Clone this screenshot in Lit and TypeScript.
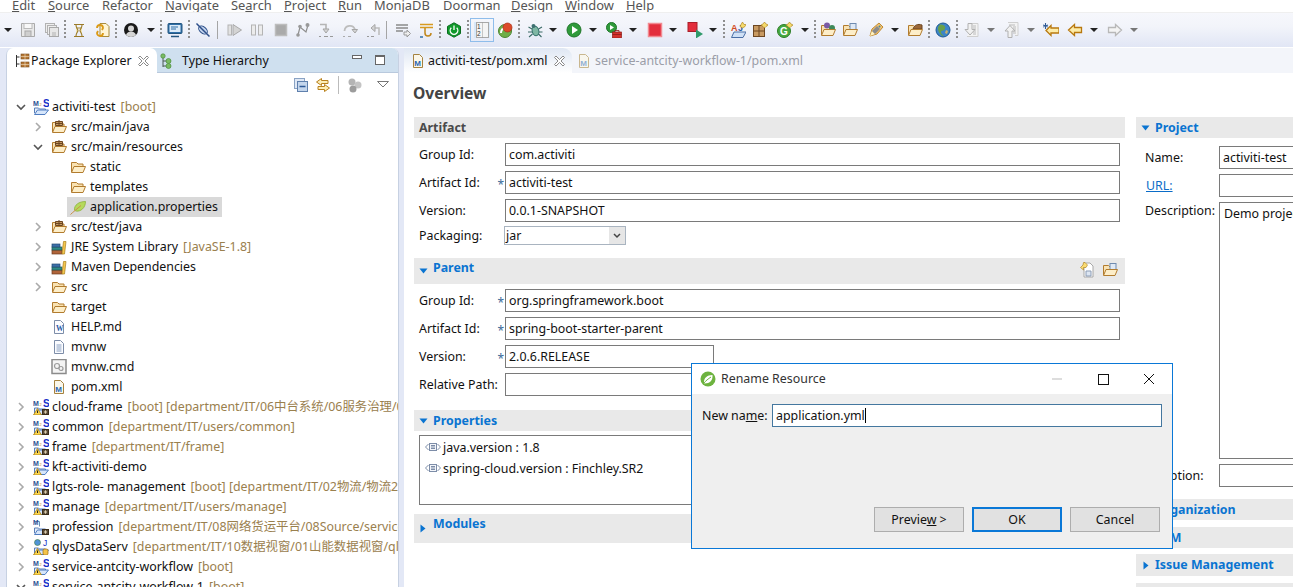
import { LitElement, html, css, svg } from "lit";
import { customElement } from "lit/decorators.js";

const ORG = "#b27c2e";
const folderBack = svg`<path d="M1.5 13V3.5h5l1.5 1.5h5V7" fill="#f9e2b2" stroke="${ORG}"/>`;
const folderFront = svg`<path d="M1.5 13.5 4 7.5h11.5l-2.5 6z" fill="#fdeec9" stroke="${ORG}"/>`;
const openFolder = svg`${folderBack}${folderFront}`;
const pkgGrid = svg`<path d="M4.5 2.5h7v4h-7zM8 1v5.500M4.500 4.500h7" fill="#c59a63" stroke="#6d4722"/>`;
const letters = svg`<text x="0" y="6.500" font-size="7" font-weight="700" font-family="Liberation Sans" fill="#2a4f93">M</text><text x="6.500" y="6.500" font-size="4" font-family="Liberation Sans" fill="#d08a20">2</text><text x="10" y="8" font-size="10" font-weight="700" font-family="Liberation Sans" fill="#1430c8">S</text>`;
const blueFolder = svg`<path d="M1.500 14V9h4l1 1h6v1" fill="#e6eefa" stroke="#5a7fb8"/><path d="M1.500 15.500l3-4.500h11l-3.500 4.500z" fill="#d6e6fb" stroke="#4f7cc0"/>`;
const warn = svg`<path d="M4.500 9.500 8.500 16H.5z" fill="#fbd44b" stroke="#a77b12" stroke-width=".8"/><path d="M4.500 11.500v2.500" stroke="#222" stroke-width="1"/>`;
const dark = svg`<rect x="9" y="10" width="7" height="6" fill="#3a2c1a"/><path d="M12.500 11v4M10.500 13h4M11 11.500l3 3M14 11.500l-3 3" stroke="#e9dcc0" stroke-width=".7"/>`;
const docBase = svg`<path d="M3.500 1.500h6l3 3v10h-9z" fill="#fbfcff" stroke="#7d8da8"/>`;

const ICONS: Record<string, unknown> = {
  proj: svg`${letters}${blueFolder}`,
  projw: svg`${letters}${blueFolder}${warn}`,
  projwd: svg`${letters}${blueFolder}${warn}${dark}`,
  projd: svg`<path d="M1.500 2.500h5v5" fill="none" stroke="#6d8ab5"/><text x="0" y="6" font-size="6.500" font-weight="700" font-family="Liberation Sans" fill="#2a4f93">M</text>${blueFolder}${dark}`,
  qlys: svg`<circle cx="4.500" cy="3.500" r="3" fill="#4f93d8" stroke="#3f7a3a" stroke-width=".6"/><text x="10" y="7" font-size="8.500" font-family="Liberation Sans" fill="#1430c8">J</text>${blueFolder}${warn}<rect x="10" y="10" width="5" height="6" rx="1.500" fill="#f3c34a" stroke="#9c6c12" stroke-width=".7"/>`,
  pkg: svg`${folderBack}${pkgGrid}${folderFront}`,
  folder: openFolder,
  leaf: svg`<path d="M4.500 11C4 6 9 2.500 15.500 2.500 15.500 8.500 11 13 5.500 12z" fill="#b6d95c" stroke="#8ab23a" stroke-width=".8"/><path d="M.5 15.500C3 13 7 10 11 6.500" stroke="#c98f45" fill="none"/>`,
  lib: svg`<rect x="1" y="11" width="10" height="4" fill="#b0643a" stroke="#6e3b1e" stroke-width=".7"/><rect x="1" y="8" width="10" height="3" fill="#2f8a87" stroke="#1d5a58" stroke-width=".7"/><rect x="1" y="5" width="8" height="3" fill="#3c6fa8" stroke="#274a75" stroke-width=".7"/><path d="M11 15 12.500 2.500h2.500L13.500 15z" fill="#f4c64f" stroke="#a97f19" stroke-width=".7"/>`,
  docw: svg`${docBase}<text x="5" y="12" font-size="7.500" font-weight="700" font-family="Liberation Serif" fill="#2a5aa5">W</text>`,
  doc: svg`${docBase}<path d="M5.500 6h5M5.500 8h5M5.500 10h5M5.500 12h5" stroke="#8aa0c0"/>`,
  cmd: svg`<rect x="1" y=".5" width="14" height="14" fill="#f4f4f4" stroke="#8b8b8b" stroke-width="1.500"/><circle cx="6" cy="7" r="2.500" fill="none" stroke="#9b9b9b" stroke-width="1.200"/><circle cx="10" cy="9.500" r="2" fill="none" stroke="#9b9b9b" stroke-width="1.200"/>`,
  m: svg`<path d="M3.500 1.500h6l3 3v10h-9z" fill="#fbf7ea" stroke="#a5823f"/><text x="4.200" y="12.500" font-size="8" font-weight="700" font-family="Liberation Sans" fill="#2a66b0">M</text>`,
  mg: svg`<path d="M3.500 1.500h6l3 3v10h-9z" fill="#f8f6ee" stroke="#c9b78f"/><text x="4.200" y="12.500" font-size="8" font-weight="700" font-family="Liberation Sans" fill="#92b0d4">M</text>`,
  pkgexp: svg`<path d="M1.500 2v12" stroke="#333" fill="none"/><path d="M1.500 4h3M1.500 11h3" stroke="#333"/><rect x="6" y="1" width="8" height="5" fill="#b57734" stroke="#7a4b1c" stroke-width=".6"/><rect x="6" y="9" width="8" height="5" fill="#b57734" stroke="#7a4b1c" stroke-width=".6"/><path d="M10 1v13M6 3.500h8M6 11.500h8" stroke="#f3e2c6" stroke-width=".6"/>`,
  hier: svg`<path d="M3 3v11M3 8h6M3 13h6" stroke="#4a5a55" fill="none"/><circle cx="3" cy="3" r="2.200" fill="#79bb63" stroke="#4c8d3d" stroke-width=".7"/><circle cx="8.500" cy="8" r="2.500" fill="#79bb63" stroke="#4c8d3d" stroke-width=".7"/><circle cx="8.500" cy="13" r="2.500" fill="#79bb63" stroke="#4c8d3d" stroke-width=".7"/>`,
  x: svg`<path d="M2.500 3.500 4 2l3.500 3.500L11 2l1.500 1.500L9 7l3.500 3.500L11 12 7.500 8.500 4 12l-1.500-1.500L6 7z" fill="#fff" stroke="#7d7d7d" stroke-width=".9" transform="translate(1 1)"/>`,
  collapse: svg`<rect x="1.500" y="1.500" width="10" height="10" fill="#dfe8f5" stroke="#8aa3c4"/><rect x="4.500" y="4.500" width="10" height="10" fill="#c4d6ec" stroke="#5f80ad"/><path d="M6.500 9.500h6" stroke="#2d5a96" stroke-width="1.300"/>`,
  link: svg`<path d="M6.500 1.500 1.500 5l5 3.500V6.500H13v-3H6.500z" fill="#fdeeb6" stroke="#b8801c"/><path d="M9.500 7.500l5 3.500-5 3.500v-2H3v-3h6.500z" fill="#fdeeb6" stroke="#b8801c"/>`,
  gears: svg`<circle cx="5" cy="5" r="3.500" fill="#b4b4b4"/><circle cx="11" cy="8" r="3.500" fill="#c4c4c4"/><circle cx="6" cy="12" r="3.500" fill="#9c9c9c"/>`,
  menu: svg`<path d="M1.500 4.500h11L7 10z" fill="#fff" stroke="#777"/>`,
  save: svg`<path d="M1.500 1.500h13v13h-13z" fill="#e9e9e9" stroke="#a9a9a9"/><rect x="4" y="1.500" width="8" height="5" fill="#f8f8f8" stroke="#b9b9b9"/><rect x="5" y="9" width="6" height="5.500" fill="#cfcfcf" stroke="#a9a9a9"/>`,
  saveall: svg`<rect x="1.500" y="1.500" width="9" height="9" fill="#eee" stroke="#b2b2b2"/><rect x="3.500" y="3.500" width="9" height="9" fill="#eee" stroke="#b2b2b2"/><rect x="5.500" y="5.500" width="9" height="9" fill="#e7e7e7" stroke="#a9a9a9"/><rect x="8" y="10" width="4" height="4" fill="#ccc"/>`,
  opentype: svg`<path d="M3 2.500h10M3 14.500h10M5 3c0 3 2 4 2 5.500S5 11 5 14M11 3c0 3-2 4-2 5.500s2 2.500 2 5.500" stroke="#9a7a28" fill="#f4e7b4" stroke-width="1.100"/><path d="M5.500 6h5" stroke="#a38632"/>`,
  openres: svg`<path d="M5 1.500h6l3 3v10H5z" fill="#fff6d6" stroke="#a98c3c"/><path d="M2 6a3 3 0 0 1 6 0L7 8M8 11a3 3 0 0 1-6 0l1-2" fill="none" stroke="#db9a16" stroke-width="1.800"/>`,
  person: svg`<circle cx="8" cy="8" r="7" fill="#1a1a1a"/><circle cx="8" cy="6.500" r="3" fill="#d5d5d5"/><path d="M3 13c1-3 3-3.500 5-3.500s4 .5 5 3.500a7 7 0 0 1-10 0z" fill="#d5d5d5"/>`,
  monitor: svg`<rect x="1" y="1.500" width="14" height="10" rx="1" fill="#2f6fa8" stroke="#24567f"/><rect x="2.500" y="3" width="11" height="7" fill="#dcebf8"/><path d="M4 5h7M4 7h5" stroke="#2f6fa8"/><path d="M4 14.500h8" stroke="#24567f" stroke-width="1.500"/>`,
  nobug: svg`<ellipse cx="8" cy="8" rx="5" ry="3.200" fill="#c4d5ee" stroke="#2d4f89" transform="rotate(40 8 8)"/><path d="M1.500 1.500 14.500 14.500" stroke="#2d4f89" stroke-width="1.500"/>`,
  resume: svg`<rect x="1" y="3" width="3.500" height="10" fill="#e2e2e2" stroke="#b4b4b4"/><path d="M6 2.500 14.500 8 6 13.500z" fill="#d4d4d4" stroke="#a9a9a9"/>`,
  pause: svg`<rect x="2.500" y="3" width="4" height="10" fill="#ececec" stroke="#b4b4b4"/><rect x="9.500" y="3" width="4" height="10" fill="#ececec" stroke="#b4b4b4"/>`,
  stopg: svg`<rect x="2.500" y="2.500" width="11" height="11" fill="#aaa" stroke="#bdbdbd" stroke-width="1.500"/>`,
  disc: svg`<path d="M3 13 5 5l6 5 2-7" fill="none" stroke="#8e8e8e" stroke-width="1.200"/><circle cx="3" cy="13" r="1.800" fill="#999"/><circle cx="5" cy="4.500" r="1.800" fill="#999"/><circle cx="12.500" cy="3" r="2" fill="#999"/>`,
  sinto: svg`<path d="M2 2.500h6l0 6" fill="none" stroke="#b5b5b5" stroke-width="1.600"/><path d="M5 7h6l-3 4z" fill="#d5d5d5" stroke="#a5a5a5"/><path d="M1 14.500h2M6 14.500h4M12 14.500h3" stroke="#999"/>`,
  sover: svg`<path d="M2.500 9C3 3 11 2 13 7.500" fill="none" stroke="#bdbdbd" stroke-width="1.800"/><path d="M10 7.500h5.500L13 11z" fill="#d5d5d5" stroke="#a5a5a5"/><path d="M1 14.500h2M6 14.500h3" stroke="#aaa"/>`,
  sret: svg`<path d="M13 13V6H8" fill="none" stroke="#bdbdbd" stroke-width="1.600"/><path d="M9 2.500v7L5 6z" fill="#d5d5d5" stroke="#a5a5a5"/><path d="M1 14.500h2M5 14.500h3" stroke="#999"/>`,
  filter: svg`<path d="M1 3h12M1 6h12M1 9h7" stroke="#8a8a8a" stroke-width="1.300"/><path d="M9 10h3V8l3.500 3.500L12 15v-2H9z" fill="#eee" stroke="#9a9a9a"/>`,
  orange2: svg`<path d="M1 2.500h13M1 5.500h13" stroke="#d89a20" stroke-width="1.300"/><path d="M6 6v5a3 3 0 0 0 6 0" fill="none" stroke="#c0861a" stroke-width="1.500"/><path d="M1 15h3" stroke="#2f6fa8" stroke-width="1.500"/>`,
  power: svg`<path d="M8 .8 14.500 4.400v7.200L8 15.200 1.500 11.600V4.400z" fill="#109a2c" stroke="#0a6c1e"/><path d="M5.300 5.800a3.800 3.800 0 1 0 5.400 0" fill="none" stroke="#fff" stroke-width="1.300"/><path d="M8 3.500v4.500" stroke="#fff" stroke-width="1.300"/>`,
  toggled: svg`<rect x="2.500" y=".5" width="12" height="15" fill="#f4f4f4" stroke="#a8a8a8"/><path d="M8.500 .5v15" stroke="#999" stroke-dasharray="1 1"/><text x="3" y="7" font-size="6.500" font-family="Liberation Sans" fill="#333">1</text><text x="3" y="14" font-size="6.500" font-family="Liberation Sans" fill="#333">2</text>`,
  redgreen: svg`<circle cx="8" cy="9" r="6.500" fill="#6fae48" stroke="#4c8431"/><path d="M4 11c0-3 2-5 5-5" stroke="#fff" stroke-width="2" fill="none"/><circle cx="10.500" cy="5.500" r="4.500" fill="#dc4a2a" stroke="#a8311a" stroke-width=".7"/>`,
  bug: svg`<ellipse cx="8.500" cy="9" rx="3.300" ry="4.800" fill="#7fb7a4" stroke="#2d6d66" transform="rotate(-15 8.500 9)"/><circle cx="6.500" cy="4" r="2" fill="#3d7070"/><path d="M1.500 5l3.500 2M1 10h4M2 15l3.500-3M15 5l-3.500 2M15.500 10H12M14.500 15l-3-3" stroke="#3a6a66" stroke-width="1.100"/>`,
  run: svg`<circle cx="8" cy="8" r="7" fill="#2f9a3a" stroke="#1e7528"/><path d="M6 4 12 8 6 12z" fill="#fff"/>`,
  runtool: svg`<circle cx="5.500" cy="5.500" r="5" fill="#2f9a3a" stroke="#1e7528"/><path d="M4 3l4 2.500L4 8z" fill="#fff"/><rect x="6.500" y="10" width="9" height="6" fill="#d4322c" stroke="#8c1c18" stroke-width=".7"/><path d="M9 10V8.500h4V10M6.500 12.500h9" stroke="#8c1c18" stroke-width=".8" fill="none"/>`,
  stopred: svg`<rect x="1.500" y="1.500" width="13" height="13" fill="#e32d3c" stroke="#f18a91" stroke-width="1.500"/>`,
  redrun: svg`<rect x="1" y="0.500" width="9" height="9" fill="#e32d3c" stroke="#a91e29"/><path d="M9 7.500 16 12 9 16.500z" fill="#2f9a6a"/>`,
  ajf: svg`<text x="1" y="8.500" font-size="9" font-weight="700" font-family="Liberation Sans" fill="#d14a22">A</text><text x="8" y="8.500" font-size="9" font-weight="700" font-family="Liberation Sans" fill="#2a5aa5">J</text><path d="M12.500 0 14 2.500l2.500 0L15 4.500 12.500 6 10 4.500 11 2.500z" fill="#f5da6a" stroke="#a77b12" stroke-width=".6"/><path d="M1.500 15.500 4 10h12l-3 5.500z" fill="#cfe0f6" stroke="#4a6ea5"/>`,
  grid: svg`<rect x="1.500" y="3.500" width="11" height="11" fill="#c89a62" stroke="#6d4722"/><path d="M7 3.500v11M1.500 9h11" stroke="#6d4722"/><path d="M12.500 0 14 2l2.500 1L14 4.500 12.500 6 11 4.500 9 3l2-1z" fill="#f5da6a" stroke="#a77b12" stroke-width=".6"/>`,
  gnew: svg`<circle cx="7" cy="9" r="6.500" fill="#46a83e" stroke="#2d7d28"/><text x="3" y="13" font-size="10" font-weight="700" font-family="Liberation Sans" fill="#fff">G</text><path d="M12.500 0 14 2l2 1-2 1.500L12.500 6 11 4.500 9 3l2-1z" fill="#f5da6a" stroke="#a77b12" stroke-width=".6"/>`,
  fuser: svg`${folderBack}<circle cx="7" cy="3.500" r="3" fill="#7a5aa5"/><circle cx="12" cy="6" r="3" fill="#3f8a5a"/>${folderFront}`,
  fbag: svg`${folderBack}<rect x="8" y="1.500" width="6" height="6" fill="#dfe9f5" stroke="#6f8bb0"/>${folderFront}`,
  pen: svg`<path d="M2 14 4 7l7-6 4 4-6 7z" fill="#f2c271" stroke="#bf8b34"/><path d="M2 14 4 9l3 3z" fill="#fff2c0"/><path d="M4 9l5-5 3 3-5 5z" fill="#8b8b8b"/><circle cx="11.500" cy="4.500" r="1" fill="#3f8aa8"/>`,
  fbrown: svg`${folderBack}<path d="M6 7C7 3 11 1.500 15 3l0 4z" fill="#9a6636" stroke="#6d4722"/>${folderFront}`,
  globe: svg`<circle cx="8" cy="8" r="7" fill="#3d85c8" stroke="#1e5a94"/><path d="M5 2.500c3 0 6 1 5 4S6 8 6 10s2 3 3 4c-3 0-4-2-5-4S2 5 5 2.500z" fill="#69a04a"/><path d="M11 8l2 1-1 3-2-1z" fill="#c9b36a"/>`,
  docdn: svg`<path d="M7 1.500h7v13H3" fill="#f3f3f3" stroke="#cfcfcf"/><path d="M9 4h3M9 6h3M9 8h3M9 10h3M9 12h3" stroke="#bbb"/><path d="M4 1.500h4v6h3l-5 5.500-5-5.500h3z" fill="#f1f1f1" stroke="#b1b1b1"/>`,
  docup: svg`<path d="M4 .5h10v13h-3" fill="#f3f3f3" stroke="#cfcfcf"/><path d="M5 3h6M9 5h3M9 7h3M9 9h3M9 11h3" stroke="#bbb"/><path d="M6 3.500 11 9H8v6.500H4V9H1z" fill="#f1f1f1" stroke="#b1b1b1"/>`,
  backstar: svg`<path d="M7 3 2 8l5 5V10.500h8v-5H7z" transform="translate(1 .5)" fill="#fdeca8" stroke="#b8780e" stroke-width="1.300"/><path d="M2.500 1v6M0 3l5 2M0 5l5-2" stroke="#2f5a95" stroke-width="1.100"/>`,
  back: svg`<path d="M7.500 2.500 1.500 8l6 5.500V10.500h7v-5h-7z" fill="#fdeca8" stroke="#b8780e" stroke-width="1.300"/>`,
  fwd: svg`<path d="M8.500 2.500 14.500 8l-6 5.500V10.500h-7v-5h7z" fill="#f4f4f4" stroke="#b8b8b8" stroke-width="1.300"/>`,
  tmpl: svg`<path d="M5 1h6l3 3v11H5z" fill="#fff" stroke="#a8a8a8"/><path d="M7 9h5v5H7z" fill="#dde6f2" stroke="#8b9cb5"/><path d="M6 .5 8.500 3 7 5.500H4.500V8L1.500 5.500 4 3 4.500.5z" fill="#fbdc73" stroke="#a77b12" stroke-width=".6"/>`,
  prop: svg`<path d="M3.500 4 .5 7l3 3M12.500 4l3 3-3 3" fill="none" stroke="#7d8da8"/><rect x="4.500" y="3.500" width="7" height="7" fill="#f4f6fa" stroke="#7d8da8"/><path d="M6 5.500h4M6 7h4M6 8.500h4" stroke="#7d8da8"/>`,
  spring: svg`<circle cx="8" cy="8" r="7.500" fill="#6db33f"/><path d="M4 12C3.500 7 7 4 12.500 4 13 9 10 12.500 4.500 12.500z" fill="#fff"/><path d="M3.500 12.500C6 9.500 8 8 11 6" stroke="#6db33f" fill="none"/>`,
};

const ic = (n: string) => html`<svg class="ic" viewBox="0 0 16 16" width="16" height="16">${ICONS[n]}</svg>`;

type T = { k: string; x: number };
const TOOLS: T[] = ([
  ["drop", 8], ["save", 28], ["saveall", 52], ["dots", 65], ["opentype", 79], ["openres", 103], ["dots", 116], ["person", 131], ["drop", 151], ["dots", 161], ["monitor", 175], ["dots", 189], ["nobug", 203], ["line", 217], ["resume", 235], ["pause", 257], ["stopg", 281], ["disc", 303], ["sinto", 326], ["sover", 350], ["sret", 374], ["line", 386], ["filter", 403], ["orange2", 427], ["dots", 440], ["power", 454], ["dots", 468], ["toggled", 482], ["redgreen", 505], ["dots", 519], ["bug", 535], ["drop", 553], ["run", 574], ["drop", 593], ["runtool", 614], ["drop", 633], ["stopred", 655], ["drop", 673], ["redrun", 695], ["drop", 713], ["dots", 724], ["ajf", 738], ["grid", 760], ["gnew", 785], ["drop", 805], ["dots", 815], ["fuser", 828], ["fbag", 850], ["pen", 876], ["drop", 895], ["fbrown", 915], ["dots", 929], ["globe", 943], ["dots", 957], ["docdn", 972], ["dropg", 991], ["docup", 1012], ["dropg", 1031], ["backstar", 1051], ["back", 1075], ["drop", 1094], ["fwd", 1115], ["dropg", 1134],
] as [string, number][]).map(([k, x]) => ({ k, x }));

const kindW = (k: string) => (k === "drop" || k === "dropg" ? 8 : k === "dots" || k === "line" ? 2 : 16);

const MENU: [string, string, string, number][] = [
  ["", "E", "dit", 12], ["", "S", "ource", 48], ["Refac", "t", "or", 102], ["", "N", "avigate", 165], ["Se", "a", "rch", 231], ["", "P", "roject", 284], ["", "R", "un", 338], ["MonjaDB", "", "", 374], ["Doorman", "", "", 443], ["", "D", "esign", 511], ["", "W", "indow", 565], ["", "H", "elp", 626],
];

type Row = { d: number; a?: "o" | "c"; i: string; t: string; dec?: string; sel?: boolean };
const TREE: Row[] = [
  { d: 0, a: "o", i: "proj", t: "activiti-test", dec: "[boot]" },
  { d: 1, a: "c", i: "pkg", t: "src/main/java" },
  { d: 1, a: "o", i: "pkg", t: "src/main/resources" },
  { d: 2, i: "folder", t: "static" },
  { d: 2, i: "folder", t: "templates" },
  { d: 2, i: "leaf", t: "application.properties", sel: true },
  { d: 1, a: "c", i: "pkg", t: "src/test/java" },
  { d: 1, a: "c", i: "lib", t: "JRE System Library", dec: "[JavaSE-1.8]" },
  { d: 1, a: "c", i: "lib", t: "Maven Dependencies" },
  { d: 1, a: "c", i: "folder", t: "src" },
  { d: 1, i: "folder", t: "target" },
  { d: 1, i: "docw", t: "HELP.md" },
  { d: 1, i: "doc", t: "mvnw" },
  { d: 1, i: "cmd", t: "mvnw.cmd" },
  { d: 1, i: "m", t: "pom.xml" },
  { d: 0, a: "c", i: "projwd", t: "cloud-frame", dec: "[boot] [department/IT/06中台系统/06服务治理/06" },
  { d: 0, a: "c", i: "projwd", t: "common", dec: "[department/IT/users/common]" },
  { d: 0, a: "c", i: "projwd", t: "frame", dec: "[department/IT/frame]" },
  { d: 0, a: "c", i: "projw", t: "kft-activiti-demo" },
  { d: 0, a: "c", i: "projwd", t: "lgts-role- management", dec: "[boot] [department/IT/02物流/物流2期" },
  { d: 0, a: "c", i: "projwd", t: "manage", dec: "[department/IT/users/manage]" },
  { d: 0, a: "c", i: "projd", t: "profession", dec: "[department/IT/08网络货运平台/08Source/service" },
  { d: 0, a: "c", i: "qlys", t: "qlysDataServ", dec: "[department/IT/10数据视窗/01山能数据视窗/qlys" },
  { d: 0, a: "c", i: "projw", t: "service-antcity-workflow", dec: "[boot]" },
  { d: 0, a: "o", i: "projw", t: "service-antcity-workflow-1", dec: "[boot]" },
];

const tri = (open: boolean) =>
  open
    ? html`<svg class="tw" viewBox="0 0 9 6" width="9" height="6"><path d="M.5 .5h8L4.500 5.500z" fill="#0a74d1"/></svg>`
    : html`<svg class="tw" viewBox="0 0 6 9" width="6" height="9"><path d="M.5 .5v8l5-4z" fill="#0a74d1"/></svg>`;

@customElement("app-root")
export class AppRoot extends LitElement {
  static styles = css`
    :host {
      display: block;
      width: 1293px;
      height: 587px;
      overflow: hidden;
      position: relative;
      background: #fff;
      font: 12.4px/18px "Noto Sans", "Noto Sans CJK SC", sans-serif;
      color: #111;
    }
    u { text-underline-offset: 1px; }
    .menu { height: 12px; display: flex; background: #fff; font-size: 12.9px; line-height: 10px; color: #555; overflow: hidden; }
    .menu span { white-space: nowrap; }
    .tools {
      height: 34px;
      display: flex;
      align-items: center;
      background: linear-gradient(#f6f7fc, #f2f4fa 40%, #e1e6f5);
      border-top: 1px solid #efefef;
    }
    .ic { display: block; flex: none; }
    .t { flex: none; display: flex; justify-content: center; }
    .drop { width: 0; height: 0; border: 4px solid transparent; border-top: 4px solid #222; border-bottom: 0; }
    .dropg { border-top-color: #777; }
    .dots { width: 2px; height: 20px; background: repeating-linear-gradient(#8f8f8f 0 2px, transparent 2px 4px); }
    .line { width: 1px; height: 18px; background: #a5a5a5; }
    .on { outline: 1px solid #8fbdeb; background: #d7e8fa; outline-offset: 3px; }
    .main { display: flex; height: 539px; background: #e3e8f6; border-top: 1px solid #fff; }
    .left {
      flex: none;
      width: 393px;
      margin-left: 6px;
      background: #fff;
      border: 1px solid #c7d1e2;
      border-width: 0 1px;
      border-radius: 7px 7px 0 0;
      overflow: hidden;
      box-sizing: border-box;
    }
    .ltabs { display: flex; background: #cfe0ef; border-bottom: 1px solid #b9c9dd; box-sizing: border-box; height: 25px; }
    .ltab { display: flex; align-items: center; height: 25px; box-sizing: border-box; white-space: nowrap; }
    .ltab.act { width: 150px; background: #fff; border-radius: 0 7px 0 0; padding-left: 8px; gap: 0; }
    .ltab.act .lbl { margin: 0 3px 0 0; }
    .ltab.oth { padding-left: 3px; gap: 6px; }
    .sp { flex: 1; }
    .winbtns { display: flex; align-items: center; gap: 13px; padding-right: 13px; }
    .minb { width: 8px; height: 2px; border: 1px solid #666; background: #fff; margin-top: -6px; }
    .maxb { width: 8px; height: 7px; border: 1px solid #666; border-top-width: 2px; background: #fff; }
    .ltools { height: 24px; display: flex; align-items: center; justify-content: flex-end; padding-right: 6px; }
    .ltools .l2 { width: 1px; height: 18px; background: #bbb; margin: 0 8px 0 7px; }
    .ltools .gm { margin-left: 6px; }
    .ltools .gm2 { margin-left: 13px; }
    .row { height: 20px; display: flex; align-items: center; white-space: nowrap; }
    .row.d0 { padding-left: 9px; }
    .row.d1 { padding-left: 26px; }
    .row .arr { width: 10px; flex: none; margin-right: 7px; }
    .row.d1 .arr { margin-right: 8px; }
    .row.d1.noarr { padding-left: 44px; }
    .row.d2.noarr { padding-left: 60px; }
    .row.d2 .wrap { padding-left: 3px; }
    .row .ico { margin-right: 3px; }
    .row.d1 .ico, .row.d2 .ico { margin-right: 4px; }
    .row .txt { padding: 0 2px 0 0; }
    .row.sel .wrap { background: #d9d9d9; }
    .wrap { display: flex; align-items: center; height: 20px; padding-right: 2px; }
    .dec { color: #9a804e; margin-left: 3px; }
    .right { flex: none; width: 889px; margin-left: 5px; background: #fff; overflow: hidden; }
    .etabs { height: 25px; display: flex; background: #f3f5fa; }
    .etab { display: flex; align-items: center; gap: 2px; height: 25px; box-sizing: border-box; white-space: nowrap; }
    .etab.act { flex: none; width: 168px; padding-left: 6px; background: linear-gradient(#dfe7f3, #fff); border-radius: 0 9px 0 0; }
    .etab.act .xi { margin-left: 1px; }
    .etab.oth { color: #9b9ea8; padding-left: 4px; gap: 3px; }
    h1 { margin: 0; font-size: 15.6px; line-height: 20px; font-weight: 700; color: #444; padding: 10px 0 0 9px; height: 34px; box-sizing: border-box; }
    .cols { display: flex; gap: 11px; padding-left: 10px; padding-top: 10px; }
    .col1 { flex: none; width: 711px; }
    .col2 { flex: none; width: 260px; }
    .sec {
      background: #e9e9e9;
      height: 21px;
      font-weight: 700;
      color: #0a74d1;
      display: flex;
      align-items: center;
      padding-left: 5px;
      gap: 5px;
    }
    .sec.plain { color: #4a4a4a; }
    .sec.parent { height: 26px; align-items: flex-start; padding-top: 1px; box-sizing: border-box; margin-top: 8px; }
    .sec.parent .tw, .sec.mods .tw { margin-top: 9px; }
    .sec.props { margin-top: 14px; }
    .sec.mods { height: 29px; align-items: flex-start; padding: 1px 0 0 6px; box-sizing: border-box; margin-top: 9px; gap: 7px; }
    .sec .acts { margin-left: auto; display: flex; gap: 7px; padding: 3px 7px 0 0; }
    .form { display: grid; grid-template-columns: 86px 615px; grid-auto-rows: 23px; row-gap: 5px; padding: 5px 0 0 5px; }
    .lab { display: flex; align-items: center; justify-content: space-between; padding-right: 1px; white-space: nowrap; }
    .lab i { font-style: normal; color: #3a6a9a; font-size: 12px; line-height: 14px; margin-top: 4px; }
    .inp { border: 1px solid #7a7a7a; box-sizing: border-box; height: 23px; line-height: 21px; padding-left: 3px; white-space: nowrap; background: #fff; }
    .inp.short { width: 209px; }
    .form .seltall { grid-column: 1 / -1; display: flex; align-items: center; height: 19px; margin-top: -1px; }
    .form .seltall .lb2 { width: 85px; }
    .select { width: 122px; height: 19px; box-sizing: border-box; border: 1px solid #a9b4c0; display: flex; align-items: center; justify-content: space-between; padding-left: 1px; background: #fff; line-height: 17px; }
    .select b { width: 16px; height: 17px; background: #e6e6e6; display: flex; align-items: center; justify-content: center; }
    .list { margin: 4px 0 0 5px; width: 690px; height: 70px; box-sizing: border-box; border: 1px solid #7a7a7a; padding: 1px 0 0 5px; }
    .li { height: 21px; display: flex; align-items: center; gap: 2px; white-space: nowrap; }
    .r2 { display: grid; grid-template-columns: 74px 240px; grid-auto-rows: auto; row-gap: 5px; padding: 8px 0 0 9px; width: 314px; }
    .l { display: flex; align-items: center; white-space: nowrap; }
    .l a { color: #0a6cc8; text-decoration: underline; padding-left: 1px; }
    .l.top { align-items: flex-start; }
    .ta { height: 257px; box-sizing: border-box; border: 1px solid #7a7a7a; padding: 2px 4px; white-space: nowrap; }
    .sec.o { margin-top: 12px; padding-left: 19px; }
    .sec.s { margin-top: 7px; padding-left: 19px; }
    .sec.i { margin-top: 6px; height: 22px; padding-left: 7px; gap: 6px; }
    .sec.n { margin-top: 7px; height: 22px; }
    .dlg {
      position: absolute;
      left: 691px;
      top: 363px;
      width: 482px;
      height: 186px;
      box-sizing: border-box;
      border: 1px solid #0a78d7;
      background: #efefef;
      display: flex;
      flex-direction: column;
    }
    .dt { height: 30px; background: #fff; display: flex; align-items: center; padding-left: 8px; gap: 5px; color: #333; flex: none; }
    .dt .ctl { margin-left: auto; display: flex; align-items: center; gap: 0; }
    .ctl svg { display: block; }
    .db { flex: 1; padding: 10px 12px 16px 10px; display: flex; flex-direction: column; }
    .nm { display: flex; align-items: center; height: 23px; white-space: nowrap; margin-right: -2px; }
    .nm .fld { flex: none; width: 390px; margin-left: auto; height: 23px; box-sizing: border-box; border: 1px solid #44779f; background: #fff; padding-left: 3px; line-height: 21px; }
    .caret { display: inline-block; width: 1px; height: 15px; background: #000; vertical-align: -3px; }
    .btns { margin-top: auto; display: flex; justify-content: flex-end; gap: 8px; }
    .btn { width: 90px; height: 25px; box-sizing: border-box; border: 1px solid #adadad; background: #e1e1e1; text-align: center; line-height: 23px; }
    .btn.ok { border: 2px solid #0a78d7; line-height: 21px; }
  `;

  private tool(t: T, i: number) {
    const w = kindW(t.k);
    const prev = i ? TOOLS[i - 1] : null;
    const left = prev ? t.x - prev.x - kindW(prev.k) / 2 - w / 2 : t.x - w / 2;
    const inner =
      t.k === "drop" ? html`<div class="drop"></div>`
      : t.k === "dropg" ? html`<div class="drop dropg"></div>`
      : t.k === "dots" ? html`<div class="dots"></div>`
      : t.k === "line" ? html`<div class="line"></div>`
      : ic(t.k);
    return html`<div class="t ${t.k === "toggled" ? "on" : ""}" style="width:${w}px;margin-left:${left}px">${inner}</div>`;
  }

  private row(r: Row) {
    const arrow = r.a === "o"
      ? html`<svg class="arr" viewBox="0 0 10 7" width="10" height="7"><path d="M1 1l4 4 4-4" fill="none" stroke="#555" stroke-width="1.600"/></svg>`
      : r.a === "c"
        ? html`<svg class="arr" viewBox="0 0 10 10" width="10" height="10"><path d="M3 1l4 4-4 4" fill="none" stroke="#aaa" stroke-width="1.600"/></svg>`
        : "";
    return html`<div class="row d${r.d} ${r.sel ? "sel" : ""} ${r.a ? "" : "noarr"}">
      ${arrow}<div class="wrap"><span class="ico">${ic(r.i)}</span><span class="txt">${r.t}</span>${r.dec ? html`<span class="dec">${r.dec}</span>` : ""}</div>
    </div>`;
  }

  private field(label: string, val: string, star = false, short = false) {
    return html`<div class="lab"><span>${label}</span>${star ? html`<i>*</i>` : ""}</div><div class="inp ${short ? "short" : ""}">${val}</div>`;
  }

  render() {
    return html`
      <div class="menu">${MENU.map((m, i) => {
        const w = i < MENU.length - 1 ? MENU[i + 1][3] - m[3] : 60;
        return html`<span style="width:${w}px;${i === 0 ? `margin-left:${m[3]}px` : ""}">${m[0]}${m[1] ? html`<u>${m[1]}</u>` : ""}${m[2]}</span>`;
      })}</div>
      <div class="tools">${TOOLS.map((t, i) => this.tool(t, i))}</div>
      <div class="main">
        <div class="left">
          <div class="ltabs">
            <div class="ltab act">${ic("pkgexp")}<span class="lbl">Package Explorer</span>${ic("x")}</div>
            <div class="ltab oth">${ic("hier")}<span>Type Hierarchy</span></div>
            <div class="sp"></div>
            <div class="winbtns"><div class="minb"></div><div class="maxb"></div></div>
          </div>
          <div class="ltools">${ic("collapse")}<span class="gm">${ic("link")}</span><span class="l2"></span>${ic("gears")}<span class="gm2">${ic("menu")}</span></div>
          ${TREE.map((r) => this.row(r))}
        </div>
        <div class="right">
          <div class="etabs">
            <div class="etab act">${ic("m")}<span>activiti-test/pom.xml</span><span class="xi">${ic("x")}</span></div>
            <div class="etab oth">${ic("mg")}<span>service-antcity-workflow-1/pom.xml</span></div>
          </div>
          <h1>Overview</h1>
          <div class="cols">
            <div class="col1">
              <div class="sec plain">Artifact</div>
              <div class="form">
                ${this.field("Group Id:", "com.activiti")}
                ${this.field("Artifact Id:", "activiti-test", true)}
                ${this.field("Version:", "0.0.1-SNAPSHOT")}
                <div class="seltall"><span class="lb2">Packaging:</span><div class="select">jar<b><svg viewBox="0 0 8 6" width="8" height="6"><path d="M1 1l3 3 3-3" fill="none" stroke="#444" stroke-width="1.500"/></svg></b></div></div>
              </div>
              <div class="sec parent">${tri(true)}<span>Parent</span><span class="acts">${ic("tmpl")}${ic("fbag")}</span></div>
              <div class="form">
                ${this.field("Group Id:", "org.springframework.boot", true)}
                ${this.field("Artifact Id:", "spring-boot-starter-parent", true)}
                ${this.field("Version:", "2.0.6.RELEASE", true, true)}
                ${this.field("Relative Path:", "")}
              </div>
              <div class="sec props">${tri(true)}<span>Properties</span></div>
              <div class="list">
                <div class="li">${ic("prop")}<span>java.version : 1.8</span></div>
                <div class="li">${ic("prop")}<span>spring-cloud.version : Finchley.SR2</span></div>
              </div>
              <div class="sec mods">${tri(false)}<span>Modules</span></div>
            </div>
            <div class="col2">
              <div class="sec">${tri(true)}<span>Project</span></div>
              <div class="r2">
                <div class="l">Name:</div><div class="inp">activiti-test</div>
                <div class="l"><a>URL:</a></div><div class="inp"></div>
                <div class="l top">Description:</div><div class="ta">Demo project for Spring Boot</div>
                <div class="l">Inception:</div><div class="inp"></div>
              </div>
              <div class="sec o">Organization</div>
              <div class="sec s">SCM</div>
              <div class="sec i">${tri(false)}<span>Issue Management</span></div>
              <div class="sec n"></div>
            </div>
          </div>
        </div>
      </div>
      <div class="dlg">
        <div class="dt">${ic("spring")}<span>Rename Resource</span>
          <div class="ctl">
            <svg viewBox="0 0 46 16" width="46" height="16"><path d="M0 8h10" stroke="#bbb"/></svg>
            <svg viewBox="0 0 46 16" width="46" height="16"><rect x="0.500" y="3.500" width="10" height="10" fill="none" stroke="#111"/></svg>
            <svg viewBox="0 0 28 16" width="28" height="16"><path d="M0 3l10 10M10 3 0 13" stroke="#111"/></svg>
          </div>
        </div>
        <div class="db">
          <div class="nm"><span>New na<u>m</u>e:</span><div class="fld">application.yml<span class="caret"></span></div></div>
          <div class="btns">
            <div class="btn">Previe<u>w</u> &gt;</div>
            <div class="btn ok">OK</div>
            <div class="btn">Cancel</div>
          </div>
        </div>
      </div>
    `;
  }
}
